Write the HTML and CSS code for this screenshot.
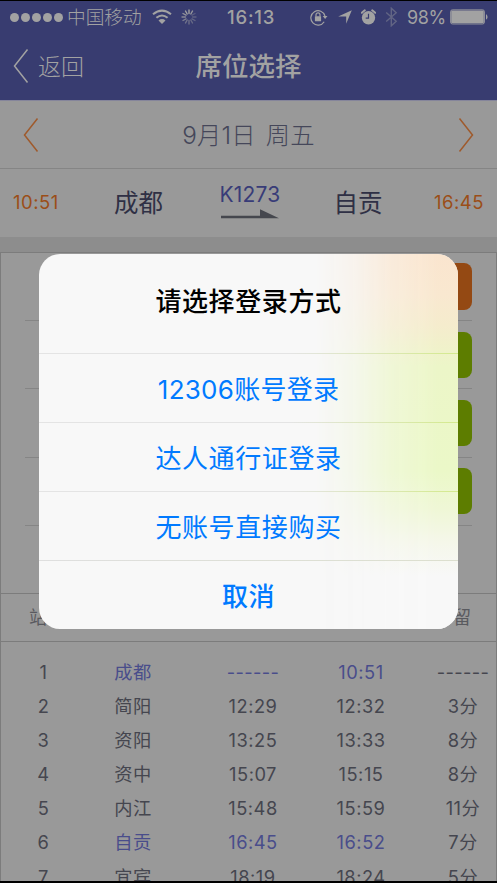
FILE: index.html
```html
<!DOCTYPE html>
<html lang="zh-CN">
<head>
<meta charset="utf-8">
<title>席位选择</title>
<link rel="stylesheet" href="styles.css">
</head>
<body>
<div class="screen">
  <header class="header">
    <div class="status">
      <div class="status-left">
        <span class="signal"><i></i><i></i><i></i><i></i><i></i></span>
        <span class="carrier">中国移动</span>
        <svg class="wifi" width="20" height="16" viewBox="0 0 20 16"><g fill="none" stroke="currentColor" stroke-width="2.1"><path d="M1 5.2Q10-2 19 5.2"/><path d="M4.4 8.8Q10 4.2 15.600 8.800"/></g><path d="M6.500 11.400Q10 8.800 13.500 11.400L10 15z" fill="currentColor"/></svg>
        <svg class="spinner" width="16" height="16" viewBox="0 0 16 16" stroke="currentColor" stroke-width="1.400" stroke-linecap="round"><path d="M8 1v3.500"/><path d="M11.500 2l-1.700 3" opacity=".9"/><path d="M14 4.500l-3 1.700" opacity=".3"/><path d="M15 8h-3.500" opacity=".35"/><path d="M14 11.500l-3-1.700" opacity=".4"/><path d="M11.500 14l-1.700-3" opacity=".45"/><path d="M8 15v-3.500" opacity=".5"/><path d="M4.500 14l1.700-3" opacity=".55"/><path d="M2 11.500l3-1.700" opacity=".65"/><path d="M1 8h3.500" opacity=".75"/><path d="M2 4.500l3 1.700" opacity=".85"/><path d="M4.500 2l1.700 3"/></svg>
      </div>
      <span class="clock">16:13</span>
      <div class="status-right">
        <svg class="lock" width="18" height="17" viewBox="0 0 18 17"><path d="M14.200 12.700A7.200 7.200 0 1 1 15 7" fill="none" stroke="currentColor" stroke-width="1.200"/><path d="M12.700 7h4.800l-2.400 3z" fill="currentColor"/><rect x="4.900" y="7.300" width="6.200" height="5" rx=".5" fill="currentColor"/><path d="M6 7.500V5.800a2 2 0 0 1 4 0v1.700" fill="none" stroke="currentColor" stroke-width="1.200"/></svg>
        <svg class="arrow" width="14" height="14" viewBox="0 0 14 14"><path d="M13.800.2L8.200 13.800V6.600H.2z" fill="currentColor"/></svg>
        <svg class="alarm" width="15" height="16" viewBox="0 0 15 16"><circle cx="7.500" cy="8.700" r="6.700" fill="currentColor"/><path d="M.8 3.800L3.800 1.300M14.200 3.800l-3-2.500" stroke="currentColor" stroke-width="2" stroke-linecap="round"/><path class="hands" d="M7.500 4.800v4.300H4.700" fill="none" stroke-width="1.200"/></svg>
        <svg class="bluetooth" width="13" height="20" viewBox="0 0 13 20"><path d="M1.200 5.500l10 8.800-4.900 4.500V1.200l4.900 4.500-10 8.800" fill="none" stroke="currentColor" stroke-width="1.400"/></svg>
        <span class="percent">98%</span>
        <svg class="battery" width="38" height="16" viewBox="0 0 38 16"><rect x=".5" y=".8" width="34" height="14.200" rx="2" fill="none" stroke="currentColor" stroke-width=".8"/><rect x="1.200" y="1.500" width="32.600" height="12.800" rx="1" fill="currentColor"/><path d="M36 5q3.200 2.900 0 5.800z" fill="currentColor"/></svg>
      </div>
    </div>
    <nav class="nav">
      <div class="back"><svg width="16" height="36" viewBox="0 0 16 36"><path d="M14.500 1.500L1.500 18l13 16.500" fill="none" stroke="currentColor" stroke-width="1.500"/></svg><span>返回</span></div>
      <h1>席位选择</h1>
      <span></span>
    </nav>
  </header>

  <section class="date-row">
    <svg width="16" height="36" viewBox="0 0 16 36"><path d="M14.500 1.500L1.500 18l13 16.500" fill="none" stroke="currentColor" stroke-width="1.500"/></svg>
    <span class="date"><span>9月1日</span><span>周五</span></span>
    <svg width="16" height="36" viewBox="0 0 16 36"><path d="M1.500 1.500l13 16.500-13 16.500" fill="none" stroke="currentColor" stroke-width="1.500"/></svg>
  </section>

  <section class="trip">
    <span class="time">10:51</span>
    <span class="city">成都</span>
    <div class="train"><span>K1273</span><svg width="58" height="10" viewBox="0 0 58 10"><path d="M0 6.800h39V.2L58 9.200H0z" fill="currentColor"/></svg></div>
    <span class="city">自贡</span>
    <span class="time">16:45</span>
  </section>

  <main class="panel">
    <div class="seats">
      <div class="seat"><b class="buy orange"></b></div>
      <div class="seat"><b class="buy"></b></div>
      <div class="seat"><b class="buy"></b></div>
      <div class="seat"><b class="buy"></b></div>
    </div>
    <div class="table-head"><span>站次</span><span>停留</span></div>
    <div class="stops">
      <div class="stop"><span>1</span><span class="hl name">成都</span><span class="hl dash">------</span><span class="hl">10:51</span><span class="dash">------</span></div>
      <div class="stop"><span>2</span><span class="name">简阳</span><span>12:29</span><span>12:32</span><span class="stay">3分</span></div>
      <div class="stop"><span>3</span><span class="name">资阳</span><span>13:25</span><span>13:33</span><span class="stay">8分</span></div>
      <div class="stop"><span>4</span><span class="name">资中</span><span>15:07</span><span>15:15</span><span class="stay">8分</span></div>
      <div class="stop"><span>5</span><span class="name">内江</span><span>15:48</span><span>15:59</span><span class="stay">11分</span></div>
      <div class="stop"><span>6</span><span class="hl name">自贡</span><span class="hl">16:45</span><span class="hl">16:52</span><span class="stay">7分</span></div>
      <div class="stop"><span>7</span><span class="name">宜宾</span><span>18:19</span><span>18:24</span><span class="stay">5分</span></div>
    </div>
  </main>

  <div class="dialog">
    <div class="dialog-title">请选择登录方式</div>
    <div class="option num">12306账号登录</div>
    <div class="option">达人通行证登录</div>
    <div class="option">无账号直接购买</div>
    <div class="option cancel">取消</div>
  </div>
</div>
</body>
</html>
```
FILE: styles.css
```css
* { box-sizing: border-box; }
body {
  margin: 0;
  font-family: Inter, "Noto Sans CJK SC", sans-serif;
  background: #000;
}
svg { display: block; flex: none; }
.screen {
  position: relative;
  width: 497px;
  height: 883px;
  overflow: hidden;
  display: flex;
  flex-direction: column;
  background: #999;
  border-top: 1px solid #000;
  border-bottom: 2px solid #000;
  color: #45464f;
}

.header {
  flex: none;
  height: 100px;
  background: #383c70;
  color: #a2a2a2;
  border-bottom: 1px solid #85859b;
}
.status {
  height: 32px;
  display: grid;
  grid-template-columns: 215px 70px 1fr;
  align-items: center;
  padding-left: 10px;
}
.status-left, .status-right { display: flex; align-items: center; }
.signal { display: flex; gap: 2px; }
.signal i { width: 9px; height: 9px; border-radius: 50%; background: currentColor; }
.carrier { margin-left: 4px; padding-top: 1px; font-size: 18.700px; font-weight: 300; line-height: 30px; }
.wifi { margin-left: 10px; }
.spinner { margin-left: 9px; }
.clock { font-size: 18.500px; font-weight: 500; letter-spacing: .8px; padding-left: 2px; }
.status-right { padding-left: 15px; }
.arrow { margin-left: 10px; }
.alarm { margin-left: 9px; }
.hands { stroke: #383c70; }
.bluetooth { margin-left: 9px; color: #626584; }
.percent { margin-left: 9px; width: 43px; font-size: 18px; letter-spacing: -.4px; }
.nav {
  height: 67px;
  padding-bottom: 1px;
  display: grid;
  grid-template-columns: 125px 1fr 125px;
  align-items: center;
}
.back { display: flex; align-items: center; gap: 9px; padding-left: 13px; font-size: 23px; font-weight: 300; }
.back span { padding-bottom: 2px; }
.nav h1 { margin: 0; text-align: center; font-size: 26.500px; font-weight: 500; line-height: 40px; }

.date-row {
  flex: none;
  height: 68px;
  padding: 0 23px;
  display: flex;
  align-items: center;
  justify-content: space-between;
  color: #9f5a2c;
  border-bottom: 1px solid #858585;
}
.date { display: flex; gap: 10px; padding-bottom: 2px; color: #45475a; font-size: 24.300px; font-weight: 300; letter-spacing: .2px; }

.trip {
  flex: none;
  height: 68px;
  display: grid;
  grid-template-columns: 72px 133px 90px 126px 76px;
  align-items: center;
  text-align: center;
}
.time { color: #9b4e18; font-size: 18.500px; letter-spacing: .5px; padding-bottom: 2px; }
.city { color: #2f3045; font-size: 24.500px; padding-bottom: 3px; }
.train { display: flex; flex-direction: column; align-items: center; gap: 1px; color: #45474e; padding-bottom: 5px; }
.train span { color: #383c78; font-size: 21px; line-height: 26px; letter-spacing: .2px; }

.panel {
  flex: 1;
  min-height: 0;
  border-top: 15px solid #8d8d8d;
  display: flex;
  flex-direction: column;
}
.seats {
  flex: none;
  height: 342px;
  border: 1px solid #7c7c7c;
  padding: 0 24px;
}
.seat {
  height: 68.200px;
  border-bottom: 1px solid #858585;
  display: flex;
  align-items: center;
  justify-content: flex-end;
}
.buy { width: 80px; height: 46.500px; border-radius: 8px; background: #5d7d00; }
.buy.orange { background: #944913; }
.table-head {
  flex: none;
  height: 48px;
  display: flex;
  align-items: center;
  justify-content: space-between;
  padding: 0 25px 3px 28px;
  border: solid #7c7c7c;
  border-width: 0 1px 1px;
  color: #595a5f;
  font-size: 18px;
}
.stops {
  flex: 1;
  min-height: 0;
  overflow: hidden;
  padding-top: 13px;
  border: solid #7c7c7c;
  border-width: 0 1px;
}
.stop {
  height: 34.080px;
  display: grid;
  grid-template-columns: 85px 94px 146px 70px 134px;
  align-items: center;
  text-align: center;
  font-size: 18.300px;
  letter-spacing: .5px;
}
.name { padding-bottom: 2px; }
.stay { padding-bottom: 2px; }
.hl { color: #494d8b; }
.dash { letter-spacing: .3px; }

.dialog {
  position: absolute;
  left: 39px;
  top: 253px;
  width: 419px;
  height: 375px;
  border-radius: 21px;
  overflow: hidden;
  background: #f8f8f8;
  isolation: isolate;
  text-align: center;
  color: #007aff;
  font-size: 26px;
  letter-spacing: .6px;
}
.dialog::before {
  content: "";
  position: absolute;
  inset: 0;
  z-index: -1;
  background: linear-gradient(180deg, #fae5cf 0%, #f9e8d0 11%, #f5eccd 19%, #ecf6c8 30%, #ebf8c8 58%, #eff7d6 68%, #f5f7ea 77%, #f8f8f8 86%);
  -webkit-mask-image: linear-gradient(90deg, transparent 66%, rgba(0,0,0,.25) 75%, rgba(0,0,0,.7) 84%, #000 95%);
  mask-image: linear-gradient(90deg, transparent 66%, rgba(0,0,0,.25) 75%, rgba(0,0,0,.7) 84%, #000 95%);
}
.dialog-title {
  height: 99px;
  line-height: 95px;
  color: #000;
  font-weight: 500;
}
.option {
  height: 69px;
  line-height: 72px;
  border-top: 1px solid;
  border-image: linear-gradient(90deg, #e4e4e4 60%, #d4ea8c 100%) 1;
}
.option.num { line-height: 71px; letter-spacing: .25px; }
.option.cancel { border-image: linear-gradient(90deg, #dfdfdf, #dcdfce) 1; font-weight: 500; }
```
